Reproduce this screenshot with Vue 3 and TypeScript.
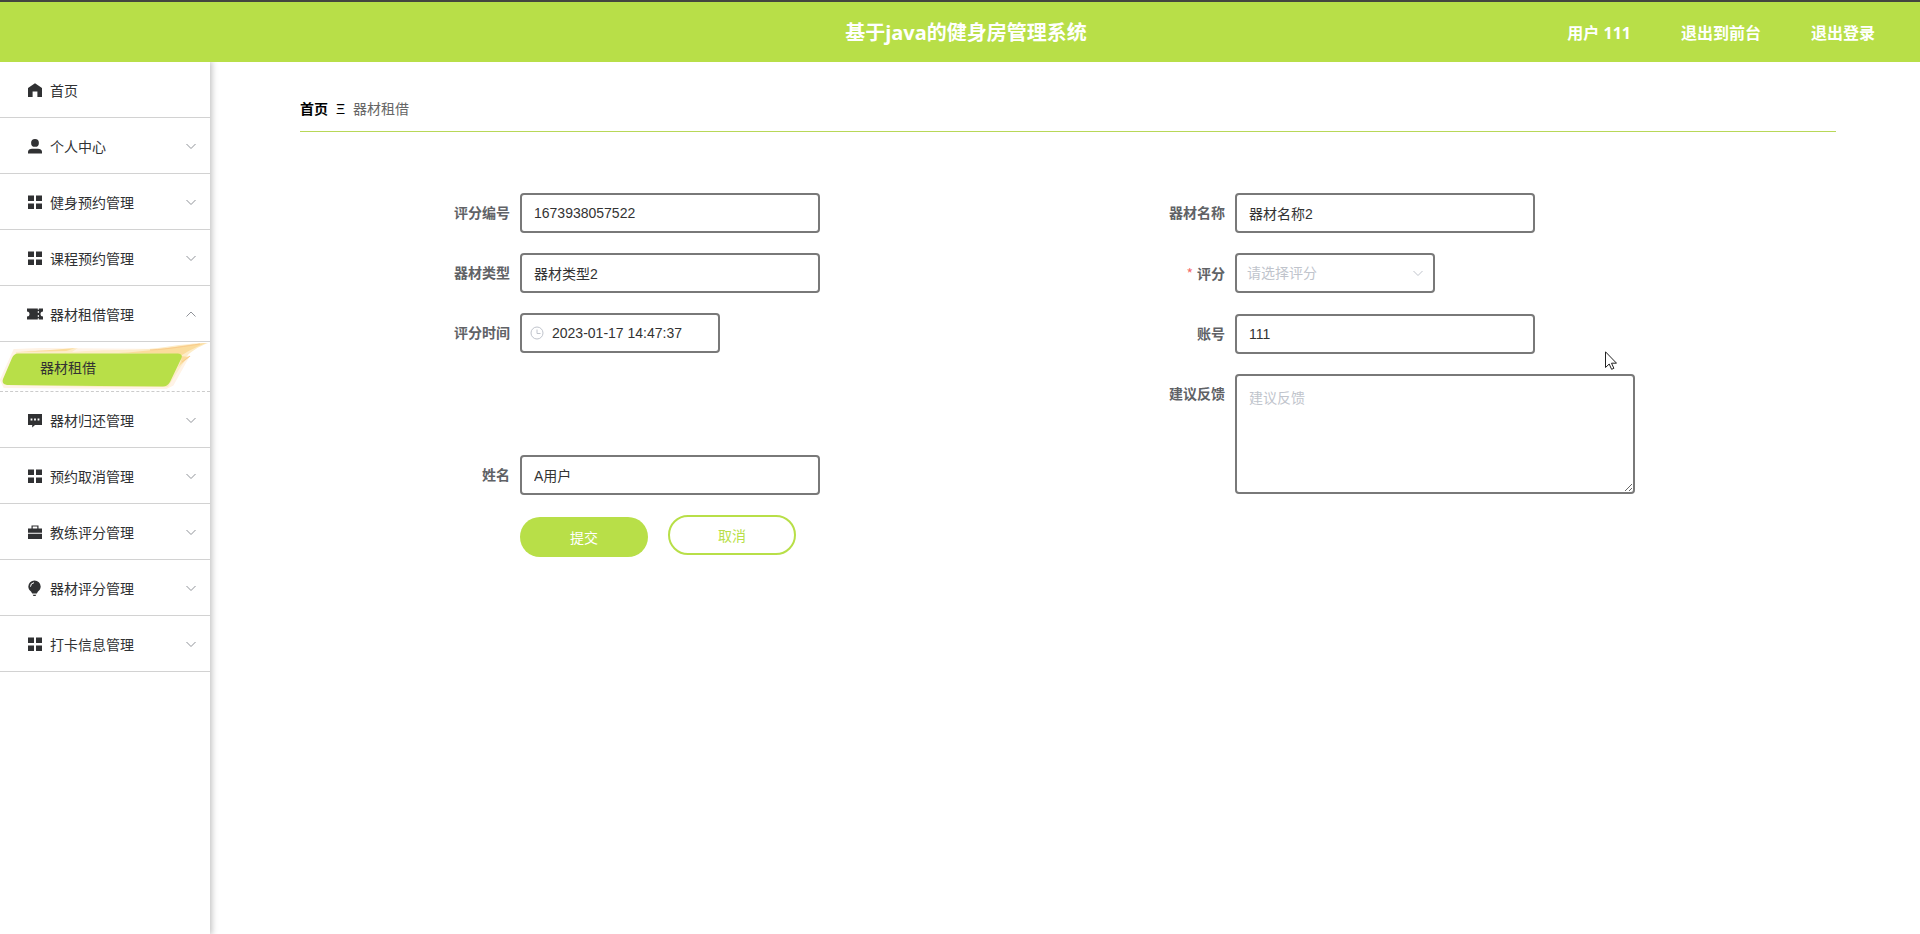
<script setup lang="ts">
import { ref } from 'vue'

interface MenuItem {
  title: string
  icon: string
  children?: string[]
  open?: boolean
}

const menu = ref<MenuItem[]>([
  { title: '首页', icon: 'home' },
  { title: '个人中心', icon: 'user', children: [] },
  { title: '健身预约管理', icon: 'grid', children: [] },
  { title: '课程预约管理', icon: 'grid', children: [] },
  { title: '器材租借管理', icon: 'ticket', children: ['器材租借'], open: true },
  { title: '器材归还管理', icon: 'comment', children: [] },
  { title: '预约取消管理', icon: 'grid', children: [] },
  { title: '教练评分管理', icon: 'case', children: [] },
  { title: '器材评分管理', icon: 'bulb', children: [] },
  { title: '打卡信息管理', icon: 'grid', children: [] },
])

const form = ref({
  code: '1673938057522',
  kind: '器材类型2',
  time: '2023-01-17 14:47:37',
  user: 'A用户',
  name: '器材名称2',
  score: '',
  account: '111',
  feedback: '',
})

const scores = ['1', '2', '3', '4', '5']

function toggle(item: MenuItem) {
  if (item.children?.length) item.open = !item.open
}
</script>

<template>
  <div class="page">
    <header class="header">
      <h1 class="title">基于java的健身房管理系统</h1>
      <nav class="account">
        <span>用户 111</span>
        <a href="#front">退出到前台</a>
        <a href="#logout">退出登录</a>
      </nav>
    </header>

    <div class="body">
      <aside class="sidebar">
        <ul class="menu">
          <li v-for="item in menu" :key="item.title">
            <button type="button" class="menu-row" :aria-expanded="item.children ? !!item.open : undefined" @click="toggle(item)">
              <svg class="menu-icon" viewBox="0 0 16 16" aria-hidden="true">
                <path v-if="item.icon === 'home'" d="M8 1.2 15 6v9h-4.6V9.6H5.6V15H1V6z" />
                <template v-else-if="item.icon === 'user'">
                  <circle cx="8" cy="4.9" r="3.9" />
                  <path d="M1 15.6v-1.8C1 11.8 3 10.7 5 10.7h6c2 0 4 1.1 4 3.1v1.8z" />
                </template>
                <path v-else-if="item.icon === 'grid'" d="M1 1.4h6v5.6H1zM9 1.4h6v5.6H9zM1 9.4h6V15H1zM9 9.4h6V15H9z" />
                <template v-else-if="item.icon === 'ticket'">
                  <path d="M0 2.5h10.800v1.200h1V2.500H16v3a2.500 2.500 0 0 0 0 5v3h-4.200v-1.200h-1v1.200H0v-3a2.500 2.500 0 0 0 0-5z" />
                  <path d="M11.3 5v2M11.3 9v2" class="cut" />
                </template>
                <template v-else-if="item.icon === 'comment'">
                  <path d="M1 2h14v11H8l-2.800 2.400V13H1z" />
                  <path d="M3.600 6.600h1.800v1.800H3.600zM7.100 6.600h1.800v1.800H7.100zM10.600 6.600h1.800v1.800h-1.800z" class="hole" />
                </template>
                <path v-else-if="item.icon === 'case'" d="M4.500 4.400V1.400h7v3H15v4.300H1V4.400zM5.700 4.400h4.600V2.600H5.700zM1 9.800h14V15H1z" fill-rule="evenodd" />
                <template v-else>
                  <path d="M7.500 0.400a6.200 6.200 0 0 1 6.200 6.200c0 2.300-1.200 3.800-2.700 5L9.800 13.600H5.200L4 11.600c-1.500-1.200-2.700-2.700-2.700-5A6.200 6.200 0 0 1 7.500.4zM5.700 14.700h3.600L8.500 16h-2z" />
                  <path d="M3.500 6.700A4 4 0 0 1 7 2.700" class="cut" />
                </template>
              </svg>
              <span class="menu-title">{{ item.title }}</span>
              <svg v-if="item.children" class="arrow" viewBox="0 0 12 12" aria-hidden="true">
                <path :d="item.open ? 'M1.500 8.500 6 4l4.500 4.500' : 'M1.500 4 6 8.500 10.500 4'" />
              </svg>
            </button>
            <template v-if="item.open">
              <a v-for="child in item.children" :key="child" class="sub-row" href="#rental">
                <svg class="brush" viewBox="0 0 210 49" preserveAspectRatio="none" aria-hidden="true">
                  <path class="glow" d="M15 9 40 8 176 9 187 15 172 42 166 45 130 45 5 44 2 38z" />
                  <path class="flame-light" d="M16 10C45 7 58 10 78 6L72 10C110 7 132 9 158 6 178 3 194 1 208 1 198 5 190 10 186 15L191 14C184 18 181 25 176 32L168 45 100 45 8 43z" />
                  <path class="flame" d="M20 10 50 8 76 6 66 9zM118 11C145 10 170 5 206 1 192 7 186 10 181 14L189 15 178 25C182 19 182 16 180 12z" />
                  <path class="streak" d="M150 8C170 7 186 4 200 2M182 20 190 14" />
                  <path class="blade" d="M18 11.500H178Q183 12 181.500 16L170 40Q167 45 162 44.500L100 44 7 43Q1 42 3 37L12 16Q14 11.500 18 11.500z" />
                </svg>
                <span class="sub-title">{{ child }}</span>
              </a>
            </template>
          </li>
        </ul>
      </aside>

      <main class="content">
        <nav class="breadcrumb" aria-label="breadcrumb">
          <a href="#home">首页</a>
          <span class="separator">Ξ</span>
          <span>器材租借</span>
        </nav>

        <form class="form" @submit.prevent>
          <div class="column">
            <div class="field">
              <label for="code">评分编号</label>
              <input id="code" v-model="form.code" class="control" type="text" />
            </div>
            <div class="field">
              <label for="kind">器材类型</label>
              <input id="kind" v-model="form.kind" class="control" type="text" />
            </div>
            <div class="field">
              <label for="time">评分时间</label>
              <div class="control short composite">
                <svg class="clock" viewBox="0 0 14 14" aria-hidden="true">
                  <circle cx="7" cy="7" r="6" />
                  <path d="M7 3.500V7.500h3.500" />
                </svg>
                <input id="time" v-model="form.time" type="text" />
              </div>
            </div>
            <div class="field user-field">
              <label for="user">姓名</label>
              <input id="user" v-model="form.user" class="control" type="text" />
            </div>
            <div class="actions">
              <button type="submit" class="submit">提交</button>
              <button type="button" class="cancel">取消</button>
            </div>
          </div>

          <div class="column">
            <div class="field">
              <label for="name">器材名称</label>
              <input id="name" v-model="form.name" class="control" type="text" />
            </div>
            <div class="field">
              <label for="score"><span class="required">*</span>评分</label>
              <div class="control short composite select-box">
                <select id="score" v-model="form.score">
                  <option value="" disabled>请选择评分</option>
                  <option v-for="s in scores" :key="s" :value="s">{{ s }}</option>
                </select>
                <svg class="arrow select-arrow" viewBox="0 0 12 12" aria-hidden="true">
                  <path d="M1.500 4 6 8.500 10.500 4" />
                </svg>
              </div>
            </div>
            <div class="field">
              <label for="account">账号</label>
              <input id="account" v-model="form.account" class="control" type="text" />
            </div>
            <div class="field">
              <label for="feedback">建议反馈</label>
              <textarea id="feedback" v-model="form.feedback" class="control area" placeholder="建议反馈"></textarea>
            </div>
          </div>
        </form>
      </main>
    </div>

    <svg class="pointer" viewBox="0 0 12 19" aria-hidden="true">
      <path d="M.500 .800V16.500L4.200 13 6.600 18.300 8.900 17.300 6.500 12.200H11.500z" />
    </svg>
  </div>
</template>

<style>
body {
  margin: 0;
}
</style>

<style scoped>
.page {
  position: relative;
  display: flex;
  flex-direction: column;
  min-height: 100vh;
  background: #fff;
  color: #333;
  font: 14px "Liberation Sans", "Noto Sans CJK SC", sans-serif;
}

.page *,
.page {
  box-sizing: border-box;
}

a {
  color: inherit;
  text-decoration: none;
}

button,
input,
select,
textarea {
  font: inherit;
}

.header {
  display: grid;
  grid-template-columns: 1fr auto 1fr;
  align-items: center;
  height: 62px;
  padding: 2px 45px 0 57px;
  border-top: 2px solid #444540;
  background: #b8df48;
  color: #fff;
  font-family: "Open Sans", "Noto Sans CJK SC", sans-serif;
  font-weight: 700;
}

.title {
  grid-column: 2;
  margin: 0;
  font-size: 20px;
  line-height: 28px;
}

.account {
  display: flex;
  justify-content: flex-end;
  gap: 50px;
  font-size: 16px;
  line-height: 24px;
}

.body {
  display: flex;
  flex: 1;
}

.sidebar {
  flex: none;
  width: 210px;
  box-shadow: 1px 0 6px 1px rgba(0, 0, 0, 0.24);
  clip-path: inset(0 -12px 0 0);
}

.menu {
  margin: 0;
  padding: 0;
  list-style: none;
}

.menu-row {
  display: flex;
  align-items: center;
  width: 100%;
  height: 56px;
  padding: 0 13px 0 27px;
  border: 0;
  border-bottom: 1px solid #d2d2d2;
  background: #fff;
  color: #303133;
  text-align: left;
}

.menu-icon {
  width: 16px;
  height: 16px;
  margin-right: 7px;
  fill: #303133;
}

.cut {
  fill: none;
  stroke: #fff;
}

.hole {
  fill: #fff;
}

.menu-title {
  flex: 1;
}

.arrow {
  width: 12px;
  height: 12px;
  fill: none;
  stroke: #909399;
}

.sub-row {
  position: relative;
  display: flex;
  align-items: center;
  height: 50px;
  padding-left: 40px;
  border-bottom: 1px dashed #ccc;
}

.brush {
  position: absolute;
  inset: 0;
  width: 100%;
  height: 100%;
}

.glow {
  fill: none;
  stroke: #fff3e6;
  stroke-width: 4;
}

.flame-light {
  fill: #fdecc8;
}

.flame {
  fill: #fbdc9c;
}

.streak {
  fill: none;
  stroke: #f9cb8c;
}

.blade {
  fill: #b8df48;
}

.sub-title {
  position: relative;
}

.content {
  flex: 1;
  padding: 36px 84px 0 90px;
}

.breadcrumb {
  display: flex;
  gap: 8px;
  height: 34px;
  border-bottom: 1px solid #b8d858;
  color: #666;
  line-height: 22px;
}

.breadcrumb a {
  color: #000;
  font-weight: 700;
}

.separator {
  color: #000;
}

.form {
  display: grid;
  grid-template-columns: 1fr 1fr;
  padding: 61px 6px 0 100px;
}

.column {
  display: flex;
  flex-direction: column;
  gap: 20px;
}

.field {
  display: flex;
}

.user-field {
  margin-top: 82px;
}

label {
  width: 120px;
  padding-right: 10px;
  color: #606266;
  font-weight: 700;
  line-height: 40px;
  text-align: right;
}

.required {
  margin-right: 4px;
  color: #f56c6c;
  font-family: "Noto Sans CJK SC", sans-serif;
  font-weight: 400;
}

.control {
  width: 300px;
  height: 40px;
  padding: 0 12px;
  border: 2px solid #797979;
  border-radius: 4px;
  background: #fff;
  color: #333;
  outline: none;
}

.short {
  width: 200px;
}

.composite {
  display: flex;
  align-items: center;
  padding: 0 8px;
}

.composite input {
  flex: 1;
  min-width: 0;
  padding: 0;
  border: 0;
  color: inherit;
  outline: none;
}

.clock {
  width: 14px;
  height: 14px;
  margin-right: 8px;
  fill: none;
  stroke: #c0c4cc;
}

.select-box {
  padding: 0 9px 0 10px;
}

.composite select {
  flex: 1;
  padding: 0;
  border: 0;
  appearance: none;
  background: none;
  color: #c0c4cc;
  outline: none;
}

.select-arrow {
  stroke: #c0c4cc;
}

.area {
  width: 400px;
  height: 120px;
  padding: 12px;
  line-height: 20px;
  resize: both;
}

.area::placeholder {
  color: #c0c4cc;
}

.actions {
  display: flex;
  align-items: flex-end;
  gap: 20px;
  height: 42px;
  padding-left: 120px;
}

.actions button {
  width: 128px;
  height: 40px;
  border-radius: 20px;
}

.submit {
  border: 0;
  background: #b8df48;
  color: #fff;
}

.cancel {
  align-self: flex-start;
  border: 2px solid #b8df48;
  background: #fff;
  color: #b8df48;
}

.pointer {
  position: absolute;
  top: 351px;
  left: 1605px;
  width: 12px;
  height: 19px;
  fill: #fff;
  stroke: #222;
}
</style>
